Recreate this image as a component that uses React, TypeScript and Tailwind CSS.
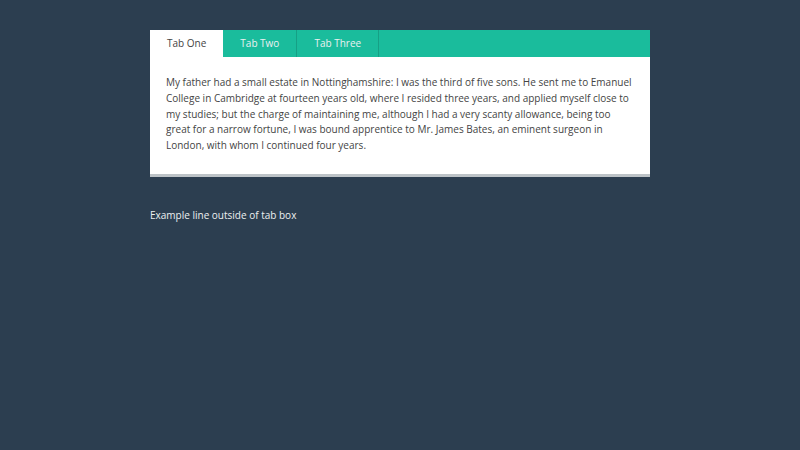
import { useState } from "react";

const tabs = ["Tab One", "Tab Two", "Tab Three"];

const content =
  "My father had a small estate in Nottinghamshire: I was the third of five sons. He sent me to Emanuel College in Cambridge at fourteen years old, where I resided three years, and applied myself close to my studies; but the charge of maintaining me, although I had a very scanty allowance, being too great for a narrow fortune, I was bound apprentice to Mr. James Bates, an eminent surgeon in London, with whom I continued four years.";

export default function App() {
  const [active, setActive] = useState(0);

  return (
    <div
      className="min-h-screen bg-[#2c3e50] pt-[30px]"
      style={{ fontFamily: '"Open Sans", "Noto Sans", sans-serif' }}
    >
      <div className="mx-auto w-[500px]">
        <div className="bg-white border-b-[3px] border-[#bdc3c7]">
          <div className="flex h-[27px] bg-[#1abc9c]">
            {tabs.map((tab, i) => (
              <button
                key={tab}
                onClick={() => setActive(i)}
                className={
                  i === active
                    ? "h-full bg-white px-[17px] text-[10px] text-[#444]"
                    : "h-full border-r border-[#16a085] px-[17px] text-[10px] text-[#ecf0f1]"
                }
              >
                {tab}
              </button>
            ))}
          </div>
          <div className="pl-4 pr-[15px] pt-[18px] pb-[20px]">
            <p className="text-[10px] leading-[15.75px] text-[#444]">{content}</p>
          </div>
        </div>
        <p className="mt-[30px] text-[10px] leading-[16px] text-[#ecf0f1]">
          Example line outside of tab box
        </p>
      </div>
    </div>
  );
}
